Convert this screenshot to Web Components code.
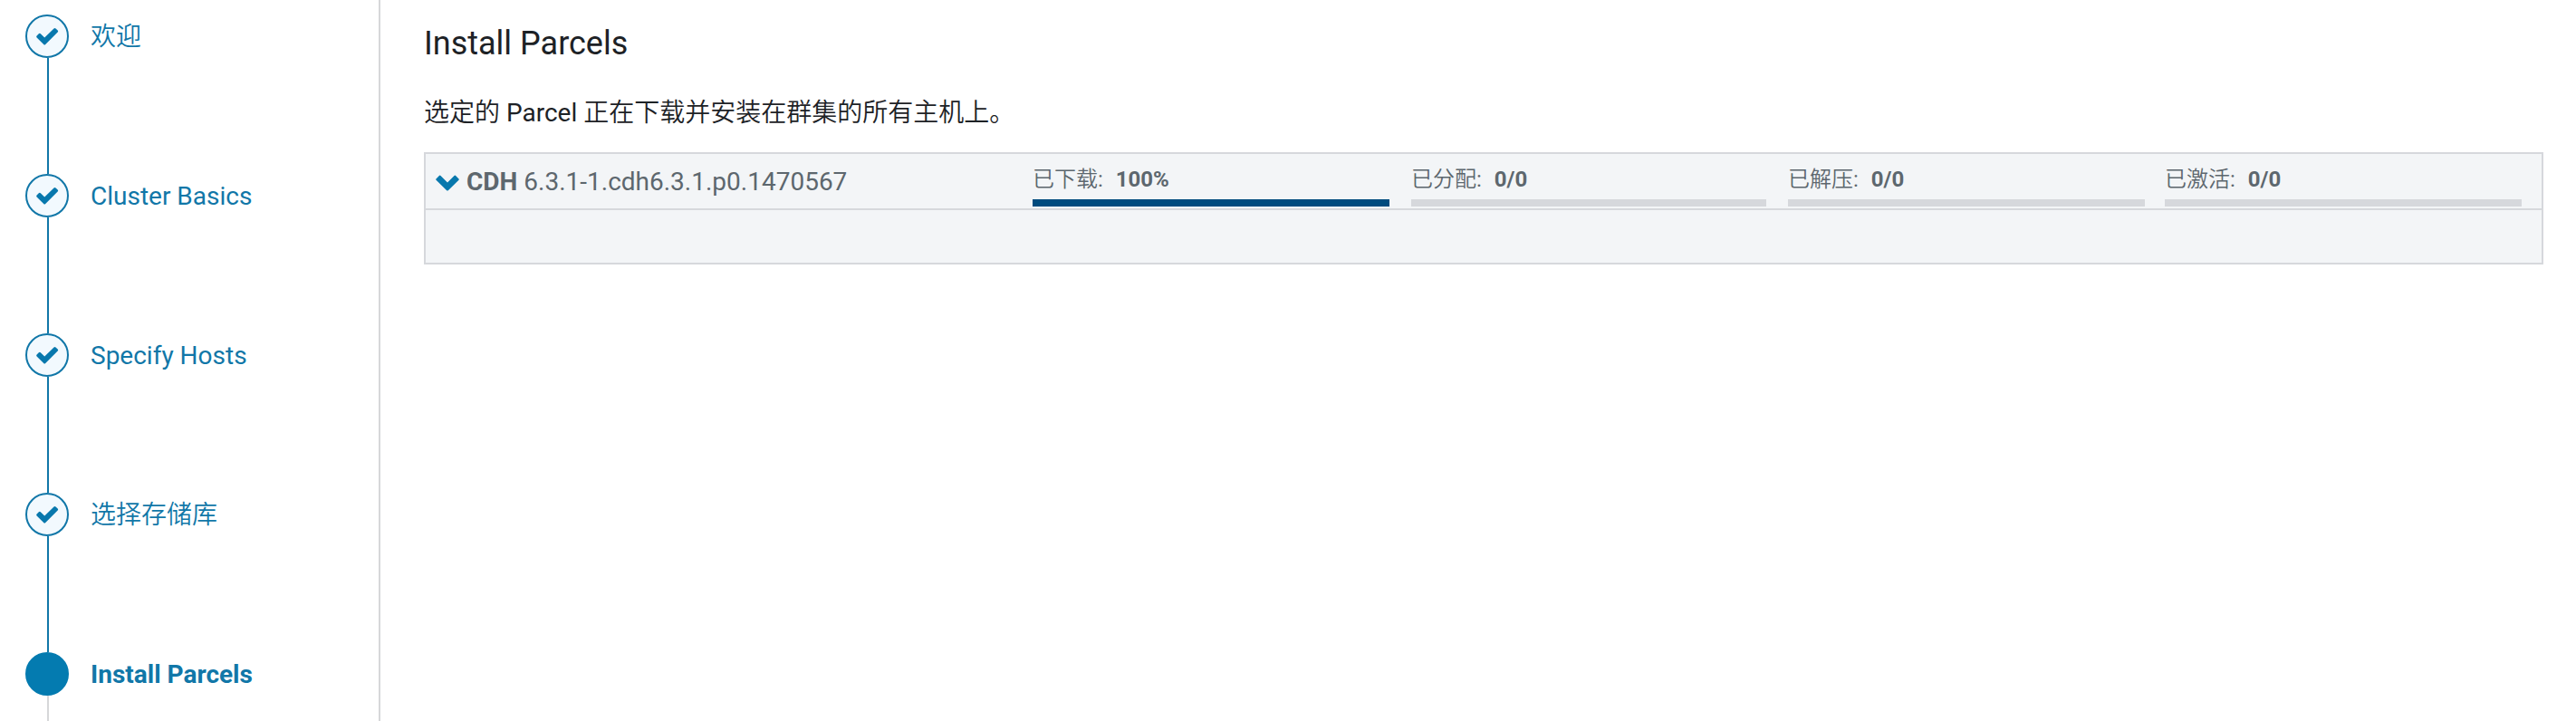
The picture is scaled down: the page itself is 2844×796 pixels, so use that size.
<!DOCTYPE html>
<html lang="zh-CN">
<head>
<meta charset="utf-8">
<title>Install Parcels</title>
<style>
html,body{margin:0;height:100%;background:#fff;overflow:hidden}
body{font-family:Roboto,"Noto Sans CJK SC DemiLight","Noto Sans CJK SC",sans-serif;font-size:28px;line-height:40px;color:#1d2226}
</style>
</head>
<body>
<install-wizard>
  <wizard-step slot="steps" state="done">欢迎</wizard-step>
  <wizard-step slot="steps" state="done">Cluster Basics</wizard-step>
  <wizard-step slot="steps" state="done">Specify Hosts</wizard-step>
  <wizard-step slot="steps" state="done">选择存储库</wizard-step>
  <wizard-step slot="steps" state="current">Install Parcels</wizard-step>
  <span slot="title">Install Parcels</span>
  <span slot="intro">选定的 Parcel 正在下载并安装在群集的所有主机上。</span>
  <parcel-panel>
    <span slot="name">CDH</span>
    <span slot="version">6.3.1-1.cdh6.3.1.p0.1470567</span>
    <parcel-progress value="100%" percent="100">已下载:</parcel-progress>
    <parcel-progress value="0/0" percent="0">已分配:</parcel-progress>
    <parcel-progress value="0/0" percent="0">已解压:</parcel-progress>
    <parcel-progress value="0/0" percent="0">已激活:</parcel-progress>
  </parcel-panel>
</install-wizard>
<script>
class ShadowElement extends HTMLElement {
  constructor() {
    super();
    this.attachShadow({mode: 'open'}).innerHTML = this.constructor.markup;
  }
}

class InstallWizard extends ShadowElement {
  static markup = `<style>
    :host{display:grid;grid-template-columns:420px 1fr;height:100vh}
    nav{box-sizing:border-box;border-right:2px solid #d6d7d9;padding:16px 0 0 28px;overflow:hidden}
    main{padding:28px 36px 0 48px}
    h1{margin:0;font-size:36px;font-weight:400;line-height:40px}
    p{margin:37px 0 23px;line-height:40px}
  </style>
  <nav><slot name="steps"></slot></nav>
  <main><h1><slot name="title"></slot></h1><p><slot name="intro"></slot></p><slot></slot></main>`;
}

class WizardStep extends ShadowElement {
  static markup = `<style>
    :host{display:grid;grid-template-columns:48px 1fr;column-gap:24px;height:176px;color:#1177a8;--line:#1177a8}
    :host([state=current]){font-weight:700;--line:#d6d7d9}
    .rail{display:flex;flex-direction:column;align-items:center}
    .dot{box-sizing:border-box;width:48px;height:48px;border:2px solid #1177a8;border-radius:50%;background:#f2f9fe;flex:none}
    .line{flex:1;width:2px;margin-left:2px;background:var(--line)}
    svg{display:block;width:44px;height:44px}
    :host([state=current]) .dot{background:#047bb0;border-color:#047bb0}
    :host([state=current]) svg{display:none}
    .label{line-height:48px;height:48px;padding-top:1px;white-space:nowrap}
  </style>
  <div class="rail"><div class="dot"><svg viewBox="0 0 44 44"><path d="M10.600 21.400l2.200-2.200q1-1 2 0l4.400 4.400L29.500 13.400q1-1 2 0l2.200 2.200q1 1 0 2L20.200 31q-1 1-2 0l-7.600-7.500q-1-1 0-2.100z" fill="#0878ad"/></svg></div><div class="line"></div></div>
  <div class="label"><slot></slot></div>`;
}

class ParcelPanel extends ShadowElement {
  static markup = `<style>
    :host{display:block;border:2px solid #d6d8dc;background:#f3f5f7;color:#5d676e}
    .head{display:grid;grid-template-columns:670px 1fr;height:60px;border-bottom:2px solid #d6d8dc}
    .name{display:flex;align-items:center;line-height:60px;padding-top:1px;height:60px;box-sizing:border-box;white-space:nowrap}
    .title{display:flex;padding-top:1px}
    svg{width:26px;height:18px;margin:2px 8px 0 11px}
    b{margin-right:7px}
    .stages{display:grid;grid-template-columns:418px 416px 416px 1fr;padding-right:22px}
    ::slotted(parcel-progress){margin-right:24px}
    ::slotted(parcel-progress:nth-last-child(2)){margin-right:22px}
    ::slotted(parcel-progress:last-child){margin-right:0}
    .detail{height:58px}
  </style>
  <div class="head">
    <div class="name"><svg viewBox="0 0 26 18"><path d="M.5 4.4L3.9 1q.8-.8 1.6 0L13 8.600 20.500 1q.8-.8 1.600 0l3.400 3.400q.7.7 0 1.400L13.800 17.200q-.8.800-1.600 0L.5 5.800q-.7-.7 0-1.400z" fill="#0878ad"/></svg><div class="title"><b><slot name="name"></slot></b><slot name="version"></slot></div></div>
    <div class="stages"><slot></slot></div>
  </div>
  <div class="detail"></div>`;
}

class ParcelProgress extends ShadowElement {
  static markup = `<style>
    :host{display:flex;flex-direction:column;font-size:24px;line-height:32px;padding-top:12px;white-space:nowrap}
    .text{height:38px;display:flex}
    b{margin-left:14px}
    .bar{height:8px;background:#d6d8dc}
    .fill{height:8px;background:#004b7e}
  </style>
  <div class="text"><span><slot></slot></span><b></b></div><div class="bar"><div class="fill"></div></div>`;
  connectedCallback() {
    this.shadowRoot.querySelector('b').textContent = this.getAttribute('value');
    this.shadowRoot.querySelector('.fill').style.width = this.getAttribute('percent') + '%';
  }
}

customElements.define('install-wizard', InstallWizard);
customElements.define('wizard-step', WizardStep);
customElements.define('parcel-panel', ParcelPanel);
customElements.define('parcel-progress', ParcelProgress);
</script>
</body>
</html>
